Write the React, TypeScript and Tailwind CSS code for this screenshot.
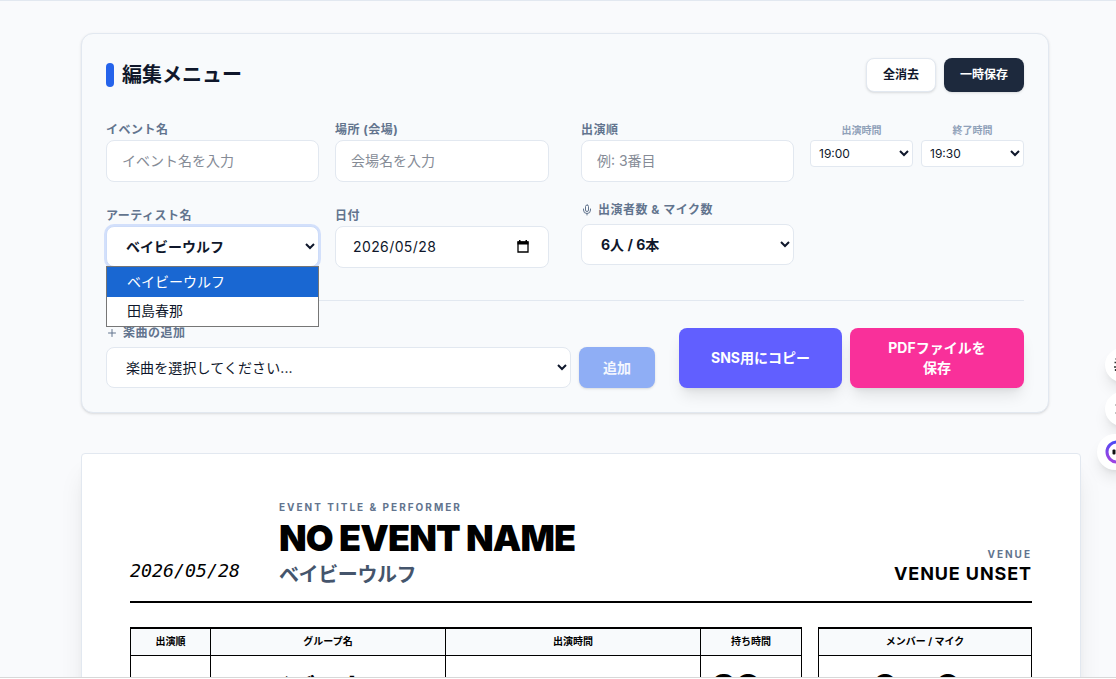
import type { ReactNode } from 'react'
import { Mic, Plus } from 'lucide-react'

const inputClass =
  'block h-[42px] w-full rounded-lg border border-slate-200 bg-white px-[15px] pb-[2px] text-sm text-slate-900 placeholder:text-[#858b96] outline-none'

function Label({ children }: { children: ReactNode }) {
  return (
    <div className="flex h-5 items-center text-xs font-bold tracking-[0.5px] whitespace-nowrap text-slate-500">
      {children}
    </div>
  )
}

function TextField({ label, placeholder }: { label: string; placeholder: string }) {
  return (
    <div>
      <Label>{label}</Label>
      <input className={inputClass} placeholder={placeholder} />
    </div>
  )
}

function TimeSelect({ label, value }: { label: string; value: string }) {
  return (
    <div className="flex-1">
      <div className="flex h-5 items-center justify-center text-[10px] font-bold text-slate-400">
        {label}
      </div>
      <select className="block h-[27px] w-full rounded border border-slate-200 bg-white px-1 text-xs text-slate-900">
        <option>{value}</option>
      </select>
    </div>
  )
}

function CalendarIcon() {
  return (
    <svg width="12" height="13" viewBox="0 0 12 13" fill="none" className="-mt-px">
      <path d="M1 2h10v10H1z" stroke="black" strokeWidth="1.3" />
      <path d="M0.5 1.5h11v3h-11zM2 0h1.5v2H2zM8.5 0H10v2H8.5z" fill="black" />
    </svg>
  )
}

function ArtistSelect() {
  return (
    <div>
      <Label>アーティスト名</Label>
      <div className="relative">
        <select className="block h-[41px] w-full rounded-lg border border-[#cddcf9] bg-white px-[15px] text-sm font-bold text-slate-900 ring-2 ring-[#d3e0fb] outline-none">
          <option>ベイビーウルフ</option>
        </select>
        <ul className="absolute top-[40px] left-0 z-10 h-[61px] w-[213px] border border-[#767676] bg-white text-sm text-slate-900">
          <li className="flex h-[30px] items-center bg-[#1967d2] pl-5 text-white">
            ベイビーウルフ
          </li>
          <li className="flex h-[29px] items-center pb-[2px] pl-5">田島春那</li>
        </ul>
      </div>
    </div>
  )
}

function EditMenu() {
  return (
    <section className="h-[380px] w-[968px] rounded-xl border border-slate-200 bg-slate-50 p-6 shadow-sm">
      <div className="flex h-[34px] items-center justify-between">
        <h2 className="flex items-center gap-2 text-xl font-bold text-slate-900">
          <span className="h-6 w-2 rounded-full bg-[#2563eb]" />
          編集メニュー
        </h2>
        <div className="flex gap-2">
          <button className="h-[34px] w-[70px] rounded-lg border border-slate-200 bg-white text-xs font-bold text-slate-900 shadow-sm">
            全消去
          </button>
          <button className="h-[34px] w-20 rounded-lg bg-slate-800 text-xs font-bold text-white shadow-sm">
            一時保存
          </button>
        </div>
      </div>

      <div className="mt-7 grid grid-cols-[443px_443px] gap-8">
        <div className="grid grid-cols-[213px_214px] gap-x-4 gap-y-6">
          <TextField label="イベント名" placeholder="イベント名を入力" />
          <TextField label="場所 (会場)" placeholder="会場名を入力" />
          <ArtistSelect />
          <div>
            <Label>日付</Label>
            <div className="flex h-[42px] items-center justify-between rounded-lg border border-slate-200 bg-white pr-[19px] pl-[17px] text-sm tracking-[0.4px] text-slate-900">
              2026/05/28
              <CalendarIcon />
            </div>
          </div>
        </div>
        <div className="grid grid-cols-[213px_214px] content-start gap-x-4 gap-y-[18px]">
          <TextField label="出演順" placeholder="例: 3番目" />
          <div className="flex gap-2">
            <TimeSelect label="出演時間" value="19:00" />
            <TimeSelect label="終了時間" value="19:30" />
          </div>
          <div>
            <Label>
              <Mic size={12} strokeWidth={2} className="mr-[5px]" />
              出演者数 &amp; マイク数
            </Label>
            <select className="mt-1 block h-[41px] w-full rounded-lg border border-slate-200 bg-white px-[15px] text-sm font-bold text-slate-900">
              <option>6人 / 6本</option>
            </select>
          </div>
        </div>
      </div>

      <div className="mt-8 flex items-end border-t border-slate-200 pt-[22px]">
        <div className="w-[465px]">
          <Label>
            <Plus size={12} className="mr-[5px]" />
            楽曲の追加
          </Label>
          <select className="mt-1 block h-[41px] w-full rounded-lg border border-slate-200 bg-white px-[15px] text-sm tracking-[0.1px] text-slate-900">
            <option>楽曲を選択してください...</option>
          </select>
        </div>
        <button className="ml-2 h-[41px] w-[76px] rounded-lg bg-[#8faef5] text-sm font-bold text-white/90 shadow-sm">
          追加
        </button>
        <button className="ml-6 h-[60px] w-[163px] rounded-lg bg-[#615fff] text-sm font-bold text-white shadow-lg">
          SNS用にコピー
        </button>
        <button className="ml-2 h-[60px] w-[174px] rounded-lg bg-[#f9309a] text-sm font-bold text-white shadow-lg">
          PDFファイルを
          <br />
          保存
        </button>
      </div>
    </section>
  )
}

function HeadCell({ children }: { children: ReactNode }) {
  return (
    <div className="flex h-[27px] items-center justify-center border-r border-b border-black bg-slate-50 pb-px text-[10px] font-bold">
      {children}
    </div>
  )
}

function BodyCell({ children }: { children?: ReactNode }) {
  return (
    <div className="flex h-[80px] items-start justify-center border-r border-black pt-[11px] font-black whitespace-nowrap">
      {children}
    </div>
  )
}

function Sheet() {
  return (
    <section className="h-[700px] w-[1000px] rounded-sm border border-slate-200 bg-white px-12 pt-12 text-black shadow-xl">
      <header className="flex h-[101px] w-[902px] items-end border-b-2 border-black">
        <div className="w-[149px] pb-[17px] font-['DejaVu_Sans_Mono',monospace] text-[18.3px] leading-[26px] italic">
          2026/05/28
        </div>
        <div className="flex-1 pb-[13px] whitespace-nowrap">
          <div className="text-[10px] leading-[15px] font-bold tracking-[2px] text-slate-500">
            EVENT TITLE &amp; PERFORMER
          </div>
          <h1 className="mt-[5px] text-4xl leading-[36px] font-black tracking-tight">
            NO EVENT NAME
          </h1>
          <div className="mt-[6px] text-xl leading-[26px] font-bold tracking-[-0.4px] text-slate-600">
            ベイビーウルフ
          </div>
        </div>
        <div className="pb-[15px] text-right whitespace-nowrap">
          <div className="text-[10px] leading-[15px] font-bold tracking-[2px] text-slate-500">
            VENUE
          </div>
          <div className="text-lg leading-6 font-bold tracking-[0.9px]">VENUE UNSET</div>
        </div>
      </header>

      <div className="mt-6 flex w-[902px] gap-4">
        <div className="grid grid-cols-[80px_235px_255px_101px] border-t-2 border-l border-black">
          <HeadCell>出演順</HeadCell>
          <HeadCell>グループ名</HeadCell>
          <HeadCell>出演時間</HeadCell>
          <HeadCell>持ち時間</HeadCell>
          <BodyCell />
          <BodyCell>
            <span className="pt-[3px] text-2xl leading-9">ベイビーウルフ</span>
          </BodyCell>
          <BodyCell />
          <BodyCell>
            <span className="text-4xl leading-10 tracking-[-0.5px]">30</span>
            <span className="mt-4 ml-[10px] text-xl">分</span>
          </BodyCell>
        </div>
        <div className="grid flex-1 grid-cols-1 border-t-2 border-l border-black">
          <HeadCell>メンバー / マイク</HeadCell>
          <BodyCell>
            <span className="text-4xl leading-10">6</span>
            <span className="mx-2 mt-4 text-sm">人 /</span>
            <span className="text-4xl leading-10">6</span>
            <span className="mt-4 ml-1 text-sm">本</span>
          </BodyCell>
        </div>
      </div>
    </section>
  )
}

function FloatingTools() {
  return (
    <div className="absolute top-[347px] left-[1097px] w-10">
      <div className="ml-2 h-[34px] w-[34px] rounded-full bg-white shadow-lg">
        <svg width="34" height="34" viewBox="0 0 34 34" stroke="#333" strokeWidth="1.3">
          <path d="M10.5 11h3M9.5 14.5h3M9 19h5M10.5 21v2" />
        </svg>
      </div>
      <div className="mt-[10px] ml-2 h-[34px] w-[34px] rounded-full bg-white shadow-lg">
        <svg width="34" height="34" viewBox="0 0 34 34" stroke="#888" strokeWidth="1">
          <path d="M10 13h3M10 21h3" />
        </svg>
      </div>
      <div className="mt-[8px] h-[36px] w-[36px] rounded-full bg-white shadow-lg">
        <svg width="36" height="36" viewBox="0 0 36 36" fill="none">
          <defs>
            <linearGradient id="ring" x1="0" y1="1" x2="0.4" y2="0">
              <stop stopColor="#a843df" />
              <stop offset="1" stopColor="#4b49f4" />
            </linearGradient>
          </defs>
          <circle cx="20" cy="18" r="10" stroke="url(#ring)" strokeWidth="3" />
          <rect x="15.5" y="15.5" width="3" height="5" rx="1" fill="#111" />
        </svg>
      </div>
    </div>
  )
}

export default function App() {
  return (
    <div className="relative h-[679px] w-[1116px] overflow-hidden border-t border-slate-200 bg-[#f9fafc] font-['Inter','Noto_Sans_CJK_JP',sans-serif]">
      <main className="flex flex-col gap-10 pt-8 pl-[81px]">
        <EditMenu />
        <Sheet />
      </main>
      <FloatingTools />
      <div className="absolute inset-x-0 bottom-0 h-[2px] border-t border-[#d8d8d8] bg-white" />
    </div>
  )
}
